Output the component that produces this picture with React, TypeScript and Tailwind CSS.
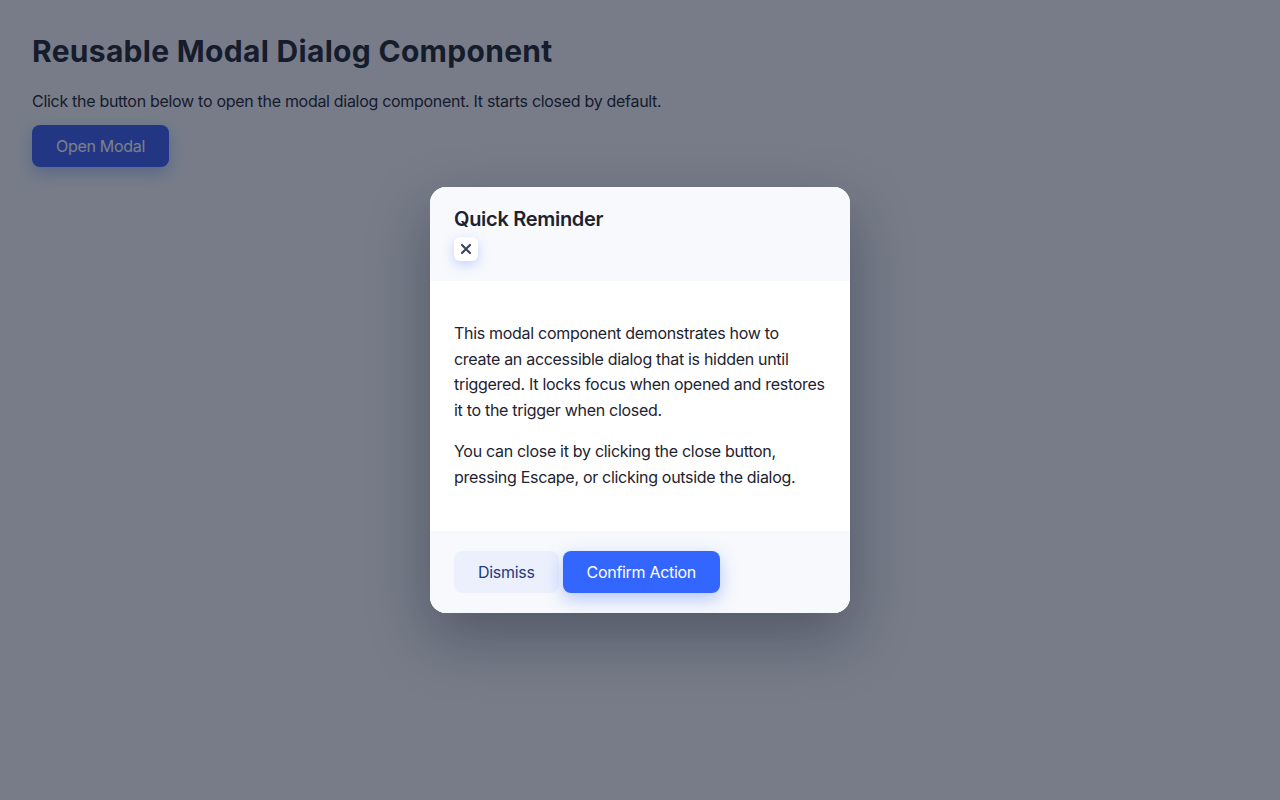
import { useState } from "react";

export default function App() {
  const [open, setOpen] = useState(true);

  return (
    <div className="relative min-h-screen bg-[#f5f7fb] font-['Inter',sans-serif] tracking-[-0.3px] text-[#1e2330]">
      <main className="px-8 pt-8">
        <h1 className="text-[30px] font-bold leading-[38px] tracking-[0.3px]">Reusable Modal Dialog Component</h1>
        <p className="mt-[19px] text-base leading-6">
          Click the button below to open the modal dialog component. It starts closed by default.
        </p>
        <button
          onClick={() => setOpen(true)}
          className="mt-[12px] h-[42px] rounded-lg bg-[#3a5cf0] px-6 text-base text-white shadow-[0_6px_16px_rgba(51,102,255,0.35)]"
        >
          Open Modal
        </button>
      </main>

      {open && (
        <div
          className="absolute inset-0 bg-[rgba(15,23,42,0.55)]"
          onClick={() => setOpen(false)}
        >
          <div
            role="dialog"
            aria-modal="true"
            onClick={(e) => e.stopPropagation()}
            className="absolute left-[430px] top-[187px] w-[420px] overflow-hidden rounded-2xl bg-white shadow-[0_24px_60px_rgba(15,23,42,0.35)]"
          >
            <div className="flex flex-col items-start gap-[5px] bg-[#f7f9fc] px-6 pt-5 pb-5">
              <h2 className="text-xl font-semibold leading-[25px] text-[#1c2230]">Quick Reminder</h2>
              <button
                onClick={() => setOpen(false)}
                aria-label="Close"
                className="flex h-6 w-6 items-center justify-center rounded-md bg-white shadow-[0_4px_12px_rgba(51,102,255,0.25)]"
              >
                <svg width="14" height="14" viewBox="0 0 14 14" fill="none" stroke="#3b4556" strokeWidth="2.2" strokeLinecap="round">
                  <path d="M3 3l8 8M11 3l-8 8" />
                </svg>
              </button>
            </div>

            <div className="px-6 py-6 text-base leading-[25.6px] text-[#1e2330]">
              <p className="my-4">
                This modal component demonstrates how to create an accessible dialog that is hidden until triggered. It locks focus when opened and restores it to the trigger when closed.
              </p>
              <p className="my-4">
                You can close it by clicking the close button, pressing Escape, or clicking outside the dialog.
              </p>
            </div>

            <div className="flex gap-1 bg-[#f7f9fc] px-6 py-5">
              <button
                onClick={() => setOpen(false)}
                className="h-[42px] rounded-lg bg-[#ecf0fd] px-6 text-base text-[#24397f]"
              >
                Dismiss
              </button>
              <button
                onClick={() => setOpen(false)}
                className="h-[42px] rounded-lg bg-[#3366ff] px-6 text-base text-white shadow-[0_6px_18px_rgba(51,102,255,0.35)]"
              >
                Confirm Action
              </button>
            </div>
          </div>
        </div>
      )}
    </div>
  );
}
